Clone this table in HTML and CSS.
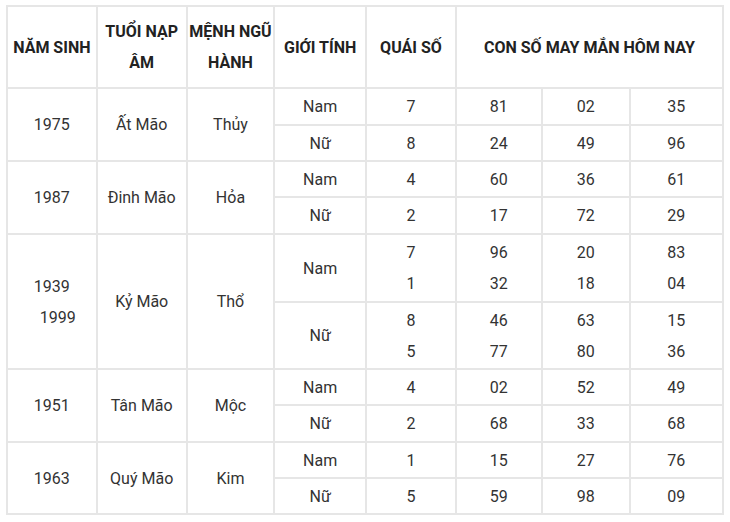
FILE: index.html
```html
<!DOCTYPE html>
<html lang="vi">
<head>
<meta charset="utf-8">
<title>Con số may mắn</title>
<link rel="stylesheet" href="styles.css">
</head>
<body>
<table class="lucky">
  <colgroup>
    <col class="c1"><col class="c2"><col class="c3"><col class="c4"><col class="c5"><col class="c6"><col class="c7"><col class="c8">
  </colgroup>
  <thead>
    <tr class="head">
      <th>NĂM SINH</th>
      <th>TUỔI NẠP ÂM</th>
      <th>MỆNH NGŨ HÀNH</th>
      <th>GIỚI TÍNH</th>
      <th>QUÁI SỐ</th>
      <th colspan="3">CON SỐ MAY MẮN HÔM NAY</th>
    </tr>
  </thead>
  <tbody>
    <tr class="h37">
      <td rowspan="2">1975</td><td rowspan="2">Ất Mão</td><td rowspan="2">Thủy</td>
      <td>Nam</td><td>7</td><td>81</td><td>02</td><td>35</td>
    </tr>
    <tr class="h36">
      <td>Nữ</td><td>8</td><td>24</td><td>49</td><td>96</td>
    </tr>
    <tr class="h36">
      <td rowspan="2">1987</td><td rowspan="2">Đinh Mão</td><td rowspan="2">Hỏa</td>
      <td>Nam</td><td>4</td><td>60</td><td>36</td><td>61</td>
    </tr>
    <tr class="h37">
      <td>Nữ</td><td>2</td><td>17</td><td>72</td><td>29</td>
    </tr>
    <tr class="h68">
      <td rowspan="2">1939<br><span class="shift">1999</span></td><td rowspan="2">Kỷ Mão</td><td rowspan="2">Thổ</td>
      <td>Nam</td><td>7<br>1</td><td>96<br>32</td><td>20<br>18</td><td>83<br>04</td>
    </tr>
    <tr class="h67">
      <td>Nữ</td><td>8<br>5</td><td>46<br>77</td><td>63<br>80</td><td>15<br>36</td>
    </tr>
    <tr class="h36">
      <td rowspan="2">1951</td><td rowspan="2">Tân Mão</td><td rowspan="2">Mộc</td>
      <td>Nam</td><td>4</td><td>02</td><td>52</td><td>49</td>
    </tr>
    <tr class="h37">
      <td>Nữ</td><td>2</td><td>68</td><td>33</td><td>68</td>
    </tr>
    <tr class="h36">
      <td rowspan="2">1963</td><td rowspan="2">Quý Mão</td><td rowspan="2">Kim</td>
      <td>Nam</td><td>1</td><td>15</td><td>27</td><td>76</td>
    </tr>
    <tr class="h36">
      <td>Nữ</td><td>5</td><td>59</td><td>98</td><td>09</td>
    </tr>
  </tbody>
</table>
</body>
</html>
```
FILE: styles.css
```css
html, body {
  margin: 0;
  padding: 0;
  background: #ffffff;
}

.lucky {
  margin: 5px 0 0 6px;
  width: 716px;
  border-collapse: collapse;
  table-layout: fixed;
  font-family: Roboto, "Liberation Sans", Arial, sans-serif;
  font-size: 16px;
  line-height: 31px;
  color: #333333;
}

.c1 { width: 89.7px; }
.c2 { width: 90px; }
.c3 { width: 87.6px; }
.c4 { width: 91.7px; }
.c5 { width: 90px; }
.c6 { width: 85.7px; }
.c7 { width: 88px; }
.c8 { width: 93.3px; }

.lucky th,
.lucky td {
  border: 2px solid #e6e6e6;
  padding: 0;
  text-align: center;
  vertical-align: middle;
}

.lucky th {
  font-weight: 700;
  color: #222222;
}

.head { height: 82px; }
.h36 { height: 36px; }
.h37 { height: 37px; }
.h67 { height: 67px; }
.h68 { height: 68px; }

.shift {
  padding-left: 12px;
}
```
